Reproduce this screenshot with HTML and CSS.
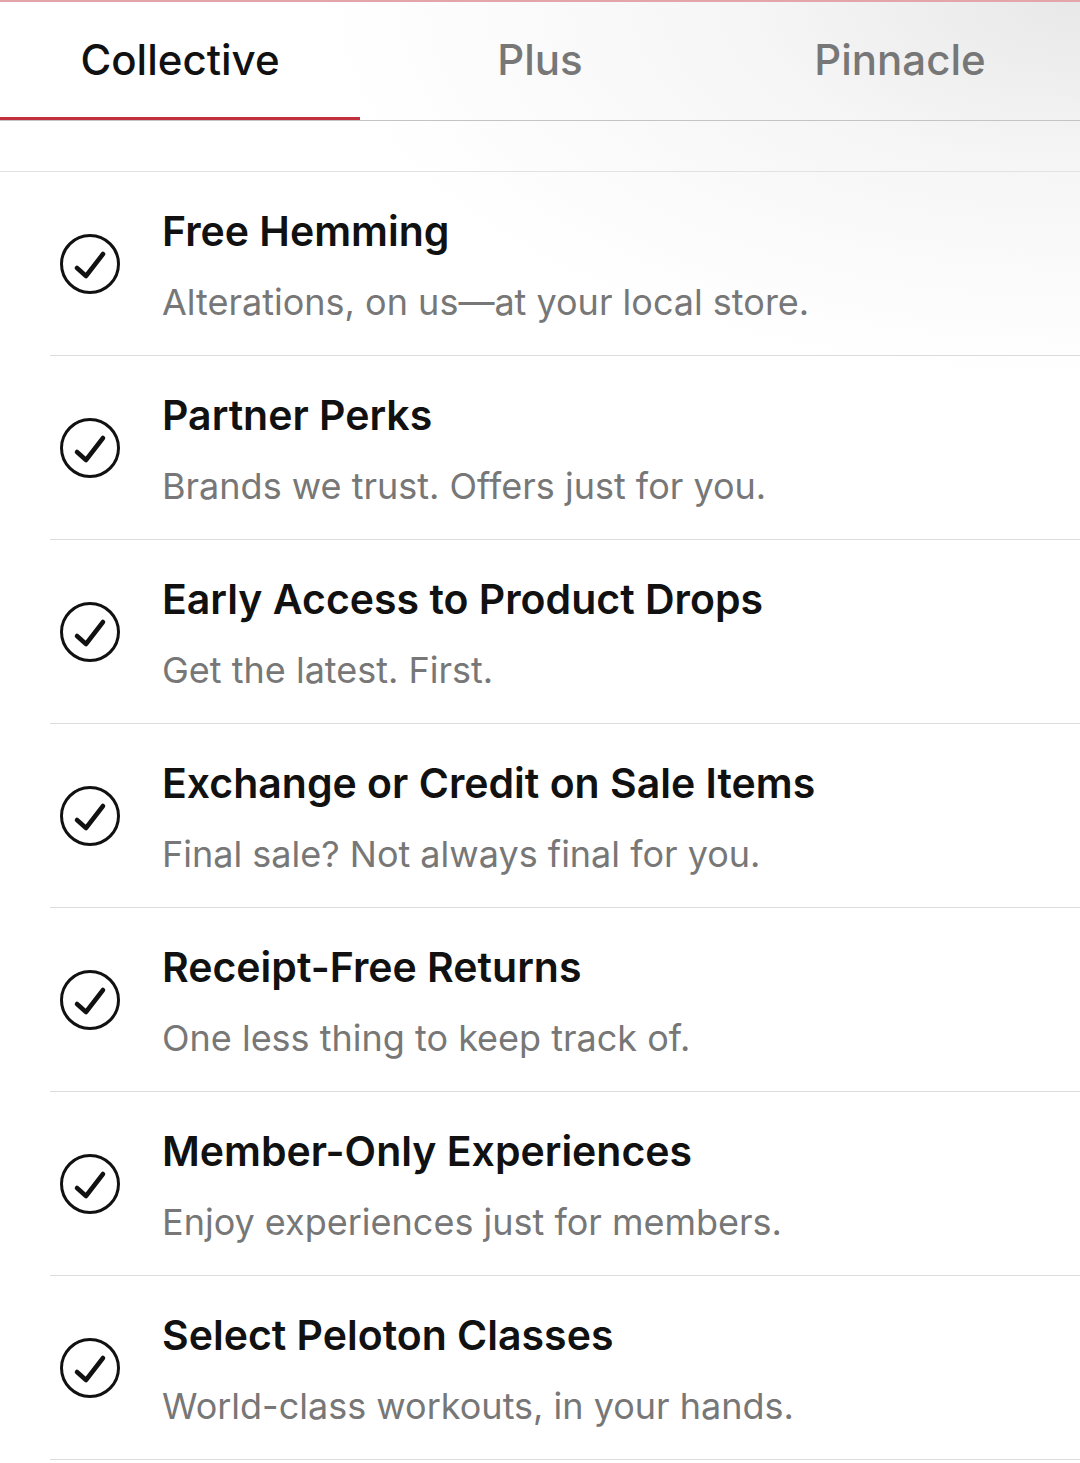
FILE: index.html
```html
<!DOCTYPE html>
<html lang="en">
<head>
    <meta charset="UTF-8">
    <meta name="viewport" content="width=device-width, initial-scale=1.0">
    <title>Membership Benefits</title>
    <link rel="stylesheet" href="styles.css">
</head>
<body>
    <!-- Pestañas de nivel -->
    <nav class="tabs">
        <div class="tab active">Collective</div>
        <div class="tab">Plus</div>
        <div class="tab">Pinnacle</div>
    </nav>
    <div class="spacer"></div>

    <!-- Lista de beneficios -->
    <ul class="benefits">
        <li class="benefit">
            <svg class="check" viewBox="0 0 60 60"><circle cx="30" cy="30" r="28.5" /><path d="M17 34 L26 42 L43 20" /></svg>
            <div class="text">
                <div class="title">Free Hemming</div>
                <div class="desc">Alterations, on us—at your local store.</div>
            </div>
        </li>
        <li class="benefit">
            <svg class="check" viewBox="0 0 60 60"><circle cx="30" cy="30" r="28.5" /><path d="M17 34 L26 42 L43 20" /></svg>
            <div class="text">
                <div class="title">Partner Perks</div>
                <div class="desc">Brands we trust. Offers just for you.</div>
            </div>
        </li>
        <li class="benefit">
            <svg class="check" viewBox="0 0 60 60"><circle cx="30" cy="30" r="28.5" /><path d="M17 34 L26 42 L43 20" /></svg>
            <div class="text">
                <div class="title">Early Access to Product Drops</div>
                <div class="desc">Get the latest. First.</div>
            </div>
        </li>
        <li class="benefit">
            <svg class="check" viewBox="0 0 60 60"><circle cx="30" cy="30" r="28.5" /><path d="M17 34 L26 42 L43 20" /></svg>
            <div class="text">
                <div class="title">Exchange or Credit on Sale Items</div>
                <div class="desc">Final sale? Not always final for you.</div>
            </div>
        </li>
        <li class="benefit">
            <svg class="check" viewBox="0 0 60 60"><circle cx="30" cy="30" r="28.5" /><path d="M17 34 L26 42 L43 20" /></svg>
            <div class="text">
                <div class="title">Receipt-Free Returns</div>
                <div class="desc">One less thing to keep track of.</div>
            </div>
        </li>
        <li class="benefit">
            <svg class="check" viewBox="0 0 60 60"><circle cx="30" cy="30" r="28.5" /><path d="M17 34 L26 42 L43 20" /></svg>
            <div class="text">
                <div class="title">Member-Only Experiences</div>
                <div class="desc">Enjoy experiences just for members.</div>
            </div>
        </li>
        <li class="benefit">
            <svg class="check" viewBox="0 0 60 60"><circle cx="30" cy="30" r="28.5" /><path d="M17 34 L26 42 L43 20" /></svg>
            <div class="text">
                <div class="title">Select Peloton Classes</div>
                <div class="desc">World-class workouts, in your hands.</div>
            </div>
        </li>
    </ul>
</body>
</html>
```

FILE: styles.css
```css
body {
    margin: 0;
    font-family: 'Inter', 'Liberation Sans', sans-serif;
    background-color: #fff;
    background-image: radial-gradient(ellipse 760px 380px at 100% 0%, #e8e8e8 0%, #f6f6f6 45%, #ffffff 100%);
    background-repeat: no-repeat;
    border-top: 2px solid #e3a4aa;
    min-height: 1461px;
}

/* Pestañas */
.tabs {
    display: flex;
    height: 118px;
    border-bottom: 1px solid #c4c4c4;
}
.tab {
    flex: 1;
    display: flex;
    align-items: center;
    justify-content: center;
    padding-bottom: 4px;
    font-size: 42px;
    font-weight: 500;
    color: #777;
}
.tab.active {
    color: #111;
    box-shadow: inset 0 -3px 0 #c2303d;
}
.spacer {
    height: 50px;
    border-bottom: 1px solid #e2e2e2;
}

/* Beneficios */
.benefits {
    list-style: none;
    margin: 0;
    padding: 0 0 0 50px;
}
.benefit {
    display: flex;
    align-items: center;
    height: 183px;
    border-bottom: 1px solid #dcdcdc;
}
.check {
    width: 60px;
    height: 60px;
    margin-left: 10px;
    flex-shrink: 0;
    fill: none;
    stroke: #111;
    stroke-width: 3;
    stroke-linecap: round;
    stroke-linejoin: round;
}
.check path {
    stroke-width: 4.5;
}
.text {
    align-self: flex-start;
    padding-top: 34px;
    margin-left: 42px;
}
.title {
    font-size: 41px;
    line-height: 50px;
    font-weight: 600;
    color: #111;
}
.desc {
    margin-top: 21px;
    font-size: 36px;
    line-height: 50px;
    color: #777;
}
```
